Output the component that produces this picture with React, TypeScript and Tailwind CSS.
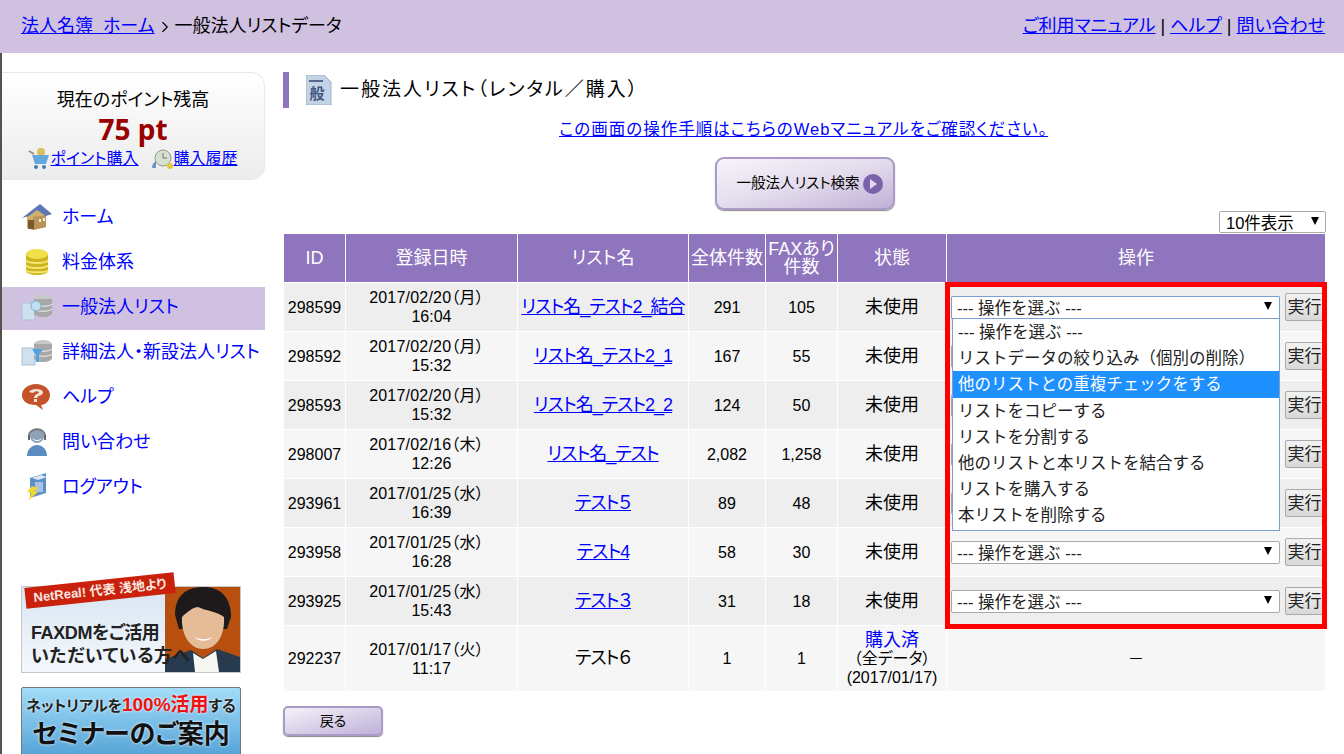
import { ChevronRight } from "lucide-react";

const jp = "font-['Liberation_Sans','Noto_Sans_CJK_JP',sans-serif]";

const rows = [
  { id: "298599", date: "2017/02/20（月）", time: "16:04", name: "リスト名_テスト2_結合", total: "291", fax: "105" },
  { id: "298592", date: "2017/02/20（月）", time: "15:32", name: "リスト名_テスト2_1", total: "167", fax: "55" },
  { id: "298593", date: "2017/02/20（月）", time: "15:32", name: "リスト名_テスト2_2", total: "124", fax: "50" },
  { id: "298007", date: "2017/02/16（木）", time: "12:26", name: "リスト名_テスト", total: "2,082", fax: "1,258" },
  { id: "293961", date: "2017/01/25（水）", time: "16:39", name: "テスト５", total: "89", fax: "48" },
  { id: "293958", date: "2017/01/25（水）", time: "16:28", name: "テスト4", total: "58", fax: "30" },
  { id: "293925", date: "2017/01/25（水）", time: "15:43", name: "テスト３", total: "31", fax: "18" },
];

const options = [
  "--- 操作を選ぶ ---",
  "リストデータの絞り込み（個別の削除）",
  "他のリストとの重複チェックをする",
  "リストをコピーする",
  "リストを分割する",
  "他のリストと本リストを結合する",
  "リストを購入する",
  "本リストを削除する",
];

function HomeIcon() {
  return (
    <svg width="32" height="28" viewBox="0 0 32 28">
      <path d="M6 13 15 6l10 6v12l-13 3-6-2z" fill="#d2b06c" />
      <path d="M12 14l13-2v12l-13 3z" fill="#b8965a" />
      <path d="M1 15 19 1l12 10-6 2-9-6-8 6z" fill="#5c78b4" />
      <path d="M7 17h6v9H7z" fill="#7a5a35" />
      <path d="M18 16h2v3h-2zM22 15h2v3h-2z" fill="#f2efe2" />
    </svg>
  );
}

function CoinIcon() {
  return (
    <svg width="32" height="28" viewBox="0 0 32 28">
      <path d="M5 6h22v17c0 2-5 4-11 4S5 25 5 23z" fill="#cdb320" />
      <path d="M5 12c1 4 21 4 22 0M5 17c1 4 21 4 22 0M5 22c1 3 21 3 22 0" stroke="#f4e770" strokeWidth="2" fill="none" />
      <ellipse cx="16" cy="6" rx="11" ry="5" fill="#efe04c" />
    </svg>
  );
}

function DbIcon({ blue }: { blue?: boolean }) {
  return (
    <svg width="32" height="28" viewBox="0 0 32 28">
      <rect x="1" y="10" width="13" height="17" fill="#cfe0ee" stroke="#a9c1d6" />
      <ellipse cx="22" cy="6" rx="9" ry="4" fill="#c8c8c8" />
      <path d="M13 6h18v14c0 2-4 4-9 4s-9-2-9-4z" fill="#a8a8a8" />
      <path d="M13 11c2 3 16 3 18 0M13 16c2 3 16 3 18 0" stroke="#eee" fill="none" />
      {blue ? <path d="M11 11h11l-4 6v7h-3v-7z" fill="#4ea4dc" /> : <circle cx="15" cy="13" r="5" fill="#bfe0f2" stroke="#7fb0cc" />}
    </svg>
  );
}

function HelpIcon() {
  return (
    <svg width="32" height="28" viewBox="0 0 32 28">
      <path d="M15 1c8 0 14 5 14 11s-5 10-9 10l2 5-7-5C6 22 1 18 1 12S7 1 15 1z" fill="#c4532c" />
      <path d="M8 9c2-4 13-4 14 0 0 4-5 3-6 6h-3c0-4 5-4 5-6-2-1-4-1-6 1zM13 16h3v3h-3z" fill="#f4e3dc" />
    </svg>
  );
}

function SupportIcon() {
  return (
    <svg width="32" height="30" viewBox="0 0 32 30">
      <path d="M6 29c0-7 5-11 10-11s10 4 10 11z" fill="#5b8cc0" />
      <circle cx="16" cy="9" r="7" fill="#8fa3b8" />
      <path d="M8 9c0-9 16-9 16 0" stroke="#777" strokeWidth="2" fill="none" />
      <path d="M7 8h2v5H7zM23 8h2v5h-2z" fill="#666" />
      <path d="M12 12c2 2 6 2 8 0" stroke="#fff" fill="none" />
    </svg>
  );
}

function LogoutIcon() {
  return (
    <svg width="32" height="32" viewBox="0 0 32 32">
      <path d="M9 7 25 2v20L9 27z" fill="#5d8fc9" />
      <path d="M11 7 20 4l6 2-9 3z" fill="#dbe7f3" />
      <path d="M14 11h8v10h-8z" fill="#a9c4e2" />
      <path d="M11 15l6 2-4 3 4 1-9 8 2-7-4-1z" fill="#f2d82c" />
    </svg>
  );
}

function DocIcon() {
  return (
    <svg width="26" height="30" viewBox="0 0 26 30">
      <path d="M0 0h18l7 7v23H0z" fill="#c4d2e6" stroke="#9fb1cc" />
      <path d="M3 5h14v2H3z" fill="#55688e" />
      <text x="3.5" y="24" fontSize="15" fontWeight="700" fill="#3f5680" fontFamily="Noto Sans CJK JP">般</text>
    </svg>
  );
}

function CartIcon() {
  return (
    <svg width="22" height="22" viewBox="0 0 22 22">
      <path d="M1 3l5 3" stroke="#a08a60" strokeWidth="2" />
      <circle cx="13" cy="4" r="4" fill="#d9c05a" />
      <path d="M4 7h17l-3 9H7z" fill="#62a8de" />
      <circle cx="8" cy="19" r="2" fill="#4878a8" />
      <circle cx="16" cy="19" r="2" fill="#4878a8" />
    </svg>
  );
}

function ClockIcon() {
  return (
    <svg width="22" height="22" viewBox="0 0 22 22">
      <path d="M0 20c0-4 2-6 4-7v7z" fill="#6e93c6" />
      <circle cx="11" cy="10" r="8" fill="#d7dfcf" stroke="#8f9f83" />
      <path d="M11 5v5h4" stroke="#777" fill="none" />
      <circle cx="18" cy="18" r="3" fill="#e5c93a" />
    </svg>
  );
}

function Portrait() {
  return (
    <svg width="75" height="85" viewBox="0 0 75 85" className="blur-[0.4px]">
      <rect width="75" height="85" fill="#b7500f" />
      <path d="M10 28C10 6 24 0 39 0c16 0 27 10 27 30l-4 12H14z" fill="#1d1a1b" />
      <path d="M17 30c6-6 12-10 16-10 8 4 18 4 26 10 1 16-6 32-21 32-14 0-22-16-21-32z" fill="#e6bb98" />
      <path d="M0 85V72l26-9 12 8 14-9 23 8v15z" fill="#283a4e" />
      <path d="M28 66l10 6 13-8 3 21H30z" fill="#f6f6f2" />
      <path d="M30 50c5 3 12 3 17 0-3 5-14 5-17 0z" fill="#fff" />
    </svg>
  );
}

function Select({ focused, covered }: { focused?: boolean; covered?: boolean }) {
  return (
    <div
      className={`flex h-[23px] w-[329px] items-center justify-between rounded-[2px] border bg-white pl-[5px] pr-[7px] pt-[3px] text-[16.5px] leading-none text-[#222] [font-feature-settings:normal] ${
        focused ? "border-[#7b9fd4] border-b-black" : "border-[#a9a9a9]"
      }`}
    >
      {covered ? null : <span>--- 操作を選ぶ ---</span>}
      {covered ? null : <span className="-mt-[5px] h-0 w-0 border-x-[4px] border-t-[8px] border-x-transparent border-t-black" />}
    </div>
  );
}

function SideItem({ icon, label, active }: { icon: React.ReactNode; label: string; active?: boolean }) {
  return (
    <a className={`flex h-[43px] items-center gap-[9px] pb-[3px] pl-[19px] text-[18px] text-[#0000ff] ${active ? "bg-[#d0c1e1]" : ""}`}>
      <span className="flex w-[32px] justify-center">{icon}</span>
      <span className="whitespace-nowrap">{label}</span>
    </a>
  );
}

function Th({ children }: { children: React.ReactNode }) {
  return <th className="border border-white bg-[#8f74be] p-0 text-[18px] font-normal leading-[18px] text-white">{children}</th>;
}

export default function App() {
  return (
    <div className={`${jp} relative h-[754px] w-[1344px] overflow-hidden bg-white text-[16px] text-black [font-feature-settings:'palt']`}>
      <header className="flex h-[53px] items-center justify-between bg-[#d0c1e1] px-[19px] text-[18px]">
        <div className="flex items-center pl-[2px]">
          <a className="whitespace-pre text-[#0000ff] underline">法人名簿  ホーム</a>
          <ChevronRight className="mx-[1px] h-[18px] w-[18px]" strokeWidth={1.5} />
          <span>一般法人リストデータ</span>
        </div>
        <div className="flex items-center gap-[5px]">
          <a className="text-[#0000ff] underline">ご利用マニュアル</a>
          <span>|</span>
          <a className="text-[#0000ff] underline">ヘルプ</a>
          <span>|</span>
          <a className="text-[#0000ff] underline">問い合わせ</a>
        </div>
      </header>

      <div className="flex">
        <aside className="h-[701px] w-[265px] shrink-0 border-l-2 border-[#57524c] pt-[19px]">
          <div className="flex h-[108px] flex-col items-center rounded-r-[14px] border border-l-0 border-[#e8e8e8] bg-gradient-to-b from-white to-[#ececec] pt-[17px]">
            <div className="text-[18px] leading-[20px]">現在のポイント残高</div>
            <div className="text-[28px] font-bold leading-[38px] text-[#990000] font-['Noto_Sans',sans-serif]">75 pt</div>
            <div className="flex items-center gap-[13px] text-[16px] leading-[18px] text-[#0000ff]">
              <a className="flex items-center underline"><CartIcon />ポイント購入</a>
              <a className="flex items-center underline"><ClockIcon />購入履歴</a>
            </div>
          </div>

          <nav className="mt-[17px] flex flex-col gap-[2px]">
            <SideItem icon={<HomeIcon />} label="ホーム" />
            <SideItem icon={<CoinIcon />} label="料金体系" />
            <SideItem icon={<DbIcon />} label="一般法人リスト" active />
            <SideItem icon={<DbIcon blue />} label="詳細法人・新設法人リスト" />
            <SideItem icon={<HelpIcon />} label="ヘルプ" />
            <SideItem icon={<SupportIcon />} label="問い合わせ" />
            <SideItem icon={<LogoutIcon />} label="ログアウト" />
          </nav>

          <div className="mt-[76px] flex flex-col gap-[14px] pl-[19px]">
            <div className="relative h-[87px] w-[220px] border border-[#c8c8c8] bg-gradient-to-b from-[#d8e6f3] to-[#f4f8fc]">
              <div className="absolute right-0 top-0">
                <Portrait />
              </div>
              <div className="absolute -top-[7px] left-[3px] flex h-[21px] w-[150px] -rotate-[6deg] items-center justify-center bg-[#c9210b] text-[13px] font-bold text-[#f8e8e0]">
                NetReal! 代表 浅地より
              </div>
              <div className="absolute left-[9px] top-[35px] text-[18px] font-bold leading-[23px] text-[#222]">
                <span className="tracking-[-0.4px]">FAXDMをご活用</span><br />
                <span className="tracking-[0.5px]">いただいている方へ</span>
              </div>
            </div>
            <div className="flex h-[90px] w-[220px] flex-col items-center rounded-t-[2px] border border-[#777] bg-gradient-to-b from-[#a2dcf8] to-[#3b93cc] pt-[5px] font-bold">
              <div className="text-[15px] leading-[24px] text-[#222] [text-shadow:0_0_3px_#fff]">
                ネットリアルを<span className="text-[19px] text-[#f01010]">100%活用</span>する
              </div>
              <div className="text-[26px] leading-[32px] text-[#111] [text-shadow:0_0_3px_#fff]">セミナーのご案内</div>
            </div>
          </div>
        </aside>

        <main className="w-[1059px] pl-[18px] pt-[19px]">
          <div className="flex h-[36px] items-center border-l-[6px] border-[#8f74be] pl-[17px]">
            <DocIcon />
            <h1 className="ml-[8px] text-[19px] tracking-[2px]">一般法人リスト（レンタル／購入）</h1>
          </div>

          <div className="mt-[10px] text-center">
            <a className="text-[16.5px] leading-[22px] tracking-[1px] text-[#0000ff] underline">この画面の操作手順はこちらのWebマニュアルをご確認ください。</a>
          </div>

          <div className="mt-[15px] flex justify-center pl-[2px]">
            <button className="flex h-[53px] w-[180px] items-center justify-center gap-[3px] rounded-[9px] border-2 border-[#a99ac6] bg-gradient-to-br from-[#f7f4fa] via-[#e4dced] to-[#bfb0d6] pl-[10px] text-[14.5px] shadow-[0_1px_1px_#888]">
              一般法人リスト検索
              <span className="flex h-[20px] w-[20px] items-center justify-center rounded-full bg-[#7a62a8]">
                <span className="ml-[2px] h-0 w-0 border-y-[5px] border-l-[7px] border-y-transparent border-l-[#e8d8f8]" />
              </span>
            </button>
          </div>

          <div className="flex h-[23px] justify-end pt-[1px]">
            <div className="-mr-[2px] flex h-[22px] w-[107px] items-center justify-between rounded-[2px] border border-[#a9a9a9] pl-[6px] pr-[6px] pt-[3px] text-[16.5px] leading-none [font-feature-settings:normal]">
              <span>10件表示</span>
              <span className="-mt-[6px] h-0 w-0 border-x-[4px] border-t-[8px] border-x-transparent border-t-black" />
            </div>
          </div>

          <table className="w-[1042px] table-fixed border-collapse text-center text-[16px] leading-[19px]">
            <colgroup>
              <col className="w-[62px]" />
              <col className="w-[172px]" />
              <col className="w-[171px]" />
              <col className="w-[77px]" />
              <col className="w-[72px]" />
              <col className="w-[109px]" />
              <col className="w-[379px]" />
            </colgroup>
            <thead>
              <tr className="h-[49px]">
                <Th>ID</Th>
                <Th>登録日時</Th>
                <Th>リスト名</Th>
                <Th>全体件数</Th>
                <Th>FAXあり<br />件数</Th>
                <Th>状態</Th>
                <Th>操作</Th>
              </tr>
            </thead>
            <tbody>
              {rows.map((r, i) => (
                <tr key={r.id} className={`h-[49px] ${i % 2 === 0 ? "bg-[#eeeeee]" : "bg-[#f6f6f6]"}`}>
                  <td className="border border-white p-0">{r.id}</td>
                  <td className="border border-white p-0"><span className="pr-[10px] tracking-[0.2px]">{r.date}</span><br />{r.time}</td>
                  <td className="border border-white p-0 text-[18px]"><a className="whitespace-nowrap tracking-[-1px] text-[#0000ff] underline">{r.name}</a></td>
                  <td className="border border-white p-0">{r.total}</td>
                  <td className="border border-white p-0">{r.fax}</td>
                  <td className="border border-white p-0 text-[18px]">未使用</td>
                  <td className="border border-white py-0 pl-[4px] pr-0">
                    <div className="flex items-center justify-between">
                      <Select focused={i === 0} covered={i > 0 && i < 5} />
                      <button className="h-[28px] w-[40px] rounded-[2px] border border-[#aaa] bg-gradient-to-b from-[#f2f2f2] to-[#d8d8d8] pr-[1px] text-[17px] leading-none text-[#222] [font-feature-settings:normal]">実行</button>
                    </div>
                  </td>
                </tr>
              ))}
              <tr className="h-[66px] bg-[#f6f6f6]">
                <td className="border border-white p-0">292237</td>
                <td className="border border-white p-0"><span className="pr-[10px] tracking-[0.2px]">2017/01/17（火）</span><br />11:17</td>
                <td className="border border-white p-0 text-[18px] tracking-[-1px]">テスト６</td>
                <td className="border border-white p-0">1</td>
                <td className="border border-white p-0">1</td>
                <td className="border border-white p-0">
                  <a className="block text-[18px] leading-[18px] text-[#0000ff]">購入済</a>（全データ）<br />(2017/01/17)
                </td>
                <td className="border border-white p-0">－</td>
              </tr>
            </tbody>
          </table>

          <button className="mt-[14px] h-[30px] w-[100px] rounded-[5px] border-2 border-[#a99ac6] bg-gradient-to-br from-[#f5f2f9] to-[#bfb1d8] text-[14px] shadow-[0_1px_1px_#888]">
            戻る
          </button>
        </main>
      </div>

      {/* open select list, over the rows */}
      <ul className="absolute left-[952px] top-[318px] h-[213px] w-[328px] border border-[#7b9fd4] bg-white text-[16.5px] leading-[26.2px] text-[#222] [font-feature-settings:normal]">
        {options.map((o, i) => (
          <li key={o} className={`pl-[5px] ${i === 2 ? "bg-[#1e90ff] text-white" : ""}`}>{o}</li>
        ))}
      </ul>

      {/* annotation frame */}
      <div className="absolute left-[945px] top-[282px] h-[347px] w-[382px] border-[5px] border-[#ff0000]" />
    </div>
  );
}
